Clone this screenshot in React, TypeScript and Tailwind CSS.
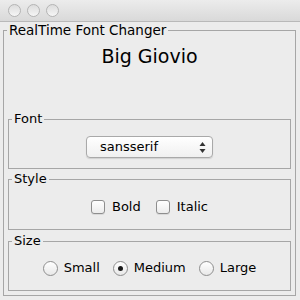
import * as React from 'react';

const font = { fontFamily: '"DejaVu Sans", "Liberation Sans", sans-serif' };

function TrafficLight() {
  return (
    <div className="h-[13px] w-[13px] rounded-full border border-[#b4b4b4] bg-gradient-to-b from-[#dcdcdc] to-[#f6f6f6]" />
  );
}

function Checkbox({ label }: { label: string }) {
  return (
    <label className="flex items-center gap-[7px]">
      <span className="h-[14px] w-[14px] rounded-[3px] border border-[#8e8e8e] bg-gradient-to-b from-[#ffffff] to-[#ececec] shadow-[0_1px_0_rgba(0,0,0,0.08)]" />
      <span className="text-[13px] leading-[16px] text-black">{label}</span>
    </label>
  );
}

function Radio({ label, checked = false }: { label: string; checked?: boolean }) {
  return (
    <label className="flex items-center gap-[6px]">
      <span className="flex h-[15px] w-[15px] items-center justify-center rounded-full border border-[#8e8e8e] bg-gradient-to-b from-[#ffffff] to-[#e8e8e8]">
        {checked && <span className="h-[5px] w-[5px] rounded-full bg-[#1a1a1a]" />}
      </span>
      <span className="text-[13px] leading-[16px] text-black">{label}</span>
    </label>
  );
}

function Panel({
  title,
  className,
  children,
}: {
  title: string;
  className?: string;
  children: React.ReactNode;
}) {
  return (
    <fieldset className={`mx-[4px] border border-[#a6a6a6] ${className ?? ''}`}>
      <legend className="ml-[3px] px-[2px] text-[13px] leading-[14px] text-black">{title}</legend>
      {children}
    </fieldset>
  );
}

export default function App() {
  return (
    <div className="h-[300px] w-[300px] overflow-hidden bg-[#ececec]" style={font}>
      {/* title bar */}
      <div className="flex h-[22px] items-center gap-[6px] border-b border-[#b9b9b9] bg-gradient-to-b from-[#ececec] to-[#d9d9d9] pl-[8px]">
        <TrafficLight />
        <TrafficLight />
        <TrafficLight />
      </div>

      <fieldset className="ml-[3px] mt-[1px] h-[273px] w-[293px] border border-[#a6a6a6]">
        <legend className="ml-[3px] px-[2px] text-[13.5px] leading-[14px] text-black">
          RealTime Font Changer
        </legend>

        <div className="mt-[7px] text-center text-[19px] leading-[24px] text-black">Big Giovio</div>

        <Panel title="Font" className="mt-[44px] h-[57px]">
          <div className="mt-[10px] flex justify-center">
            <div className="flex h-[22px] w-[127px] items-center justify-between rounded-[4px] border border-[#a9a9a9] bg-gradient-to-b from-[#ffffff] to-[#f0f0f0] pl-[13px] pr-[6px] shadow-[0_1px_1px_rgba(0,0,0,0.12)]">
              <span className="text-[13px] leading-[16px] text-black">sansserif</span>
              <svg width="7" height="13" viewBox="0 0 7 13">
                <path d="M3.5 1 L6.5 5 L0.5 5 Z" fill="#333" />
                <path d="M3.5 12 L6.5 8 L0.5 8 Z" fill="#333" />
              </svg>
            </div>
          </div>
        </Panel>

        <Panel title="Style" className="mt-[3px] h-[58px]">
          <div className="mt-[13px] flex justify-center gap-[15px]">
            <Checkbox label="Bold" />
            <Checkbox label="Italic" />
          </div>
        </Panel>

        <Panel title="Size" className="mt-[4px] h-[57px]">
          <div className="mt-[12px] flex justify-center gap-[13px]">
            <Radio label="Small" />
            <Radio label="Medium" checked />
            <Radio label="Large" />
          </div>
        </Panel>
      </fieldset>
    </div>
  );
}
